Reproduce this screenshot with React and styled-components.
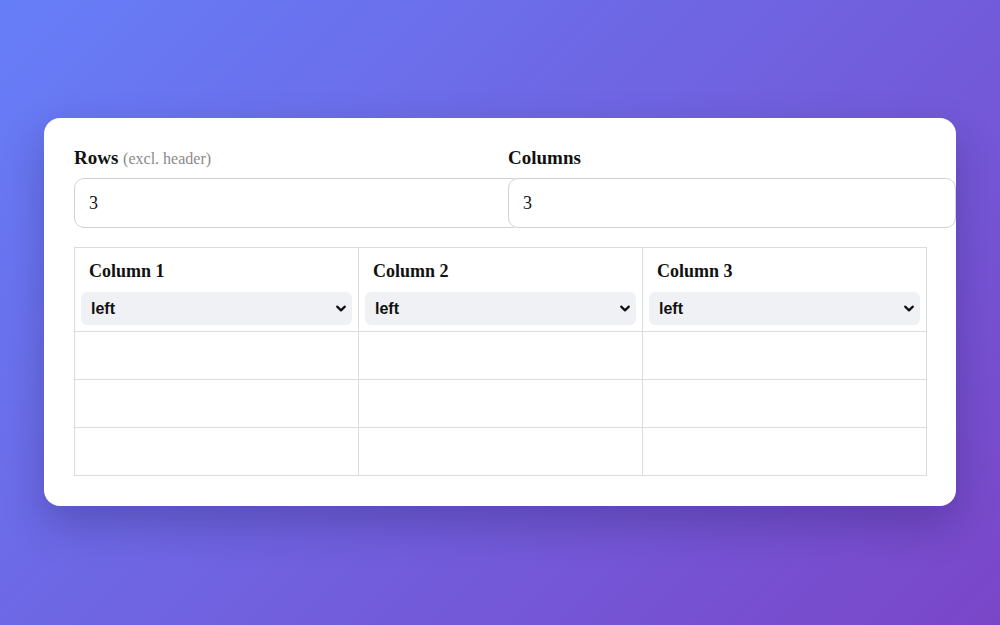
import React, { useState } from 'react';
import styled, { createGlobalStyle } from 'styled-components';

const GlobalStyle = createGlobalStyle`
  html, body {
    margin: 0;
    padding: 0;
  }
  body {
    font-family: "Liberation Serif", "Times New Roman", serif;
    color: #111;
  }
  * {
    box-sizing: content-box;
  }
`;

const Page = styled.div`
  box-sizing: border-box;
  min-height: 625px;
  padding-bottom: 2px;
  display: flex;
  align-items: center;
  justify-content: center;
  background: linear-gradient(135deg, #667ef8 0%, #7a46c8 100%);
`;

const Card = styled.div`
  width: 852px;
  padding: 30px;
  background: #fff;
  border-radius: 16px;
  overflow: hidden;
  box-shadow: 0 18px 40px rgba(30, 20, 80, 0.28);
`;

const SizeFields = styled.div`
  display: grid;
  grid-template-columns: 1fr 1fr;
  gap: 16px;
  margin-bottom: 19px;
`;

const Field = styled.div`
  display: flex;
  flex-direction: column;
  min-width: 0;
`;

const Label = styled.label`
  display: block;
  height: 20px;
  font-size: 19px;
  font-weight: 700;
  line-height: 20px;
  margin-bottom: 10px;
`;

const Hint = styled.span`
  font-size: 16px;
  font-weight: 400;
  line-height: 16px;
  color: #8a8a8a;
`;

const NumberInput = styled.input`
  width: 100%;
  padding: 14px;
  border: 1px solid #d2d2d2;
  border-radius: 10px;
  font-family: "Liberation Serif", "Times New Roman", serif;
  font-size: 18px;
  line-height: 20px;
  color: #111;
  background: #fff;
  outline: none;
`;

const Table = styled.table`
  width: 100%;
  border-collapse: collapse;
  table-layout: fixed;
  border: 1px solid #dcdcdc;
`;

const HeadCell = styled.th`
  padding: 6px;
  border: 1px solid #dcdcdc;
  text-align: left;
  vertical-align: top;
  font-weight: 400;
`;

const ColumnTitle = styled.div`
  padding: 7px 8px 11px;
  font-size: 18px;
  font-weight: 700;
  line-height: 20px;
`;

const SelectWrap = styled.div`
  position: relative;
`;

const AlignSelect = styled.select`
  appearance: none;
  -webkit-appearance: none;
  display: block;
  width: 100%;
  box-sizing: border-box;
  height: 33px;
  padding: 0 28px 0 10px;
  border: none;
  border-radius: 6px;
  background: #f0f1f4;
  font-family: "Liberation Sans", Arial, sans-serif;
  font-size: 16px;
  font-weight: 700;
  color: #111;
  outline: none;
`;

const Chevron = styled.svg`
  position: absolute;
  right: 5px;
  top: 12px;
  pointer-events: none;
`;

const BodyCell = styled.td`
  height: 47px;
  padding: 0;
  border: 1px solid #dcdcdc;
`;

const ChevronDown = () => (
  <Chevron width="12" height="9" viewBox="0 0 12 9">
    <path d="M2.2 2.6 L6 6.4 L9.8 2.6" fill="none" stroke="#111" strokeWidth="2.2" strokeLinecap="round" strokeLinejoin="round" />
  </Chevron>
);

export default function App() {
  const [rows, setRows] = useState('3');
  const [cols, setCols] = useState('3');
  const [aligns, setAligns] = useState(['left', 'left', 'left']);

  const colCount = Math.max(1, parseInt(cols, 10) || 1);
  const rowCount = Math.max(0, parseInt(rows, 10) || 0);

  const setAlign = (i, value) => {
    const next = [...aligns];
    next[i] = value;
    setAligns(next);
  };

  return (
    <Page>
      <GlobalStyle />
      <Card>
        <SizeFields>
          <Field>
            <Label>
              Rows <Hint>(excl. header)</Hint>
            </Label>
            <NumberInput value={rows} onChange={(e) => setRows(e.target.value)} />
          </Field>
          <Field>
            <Label>Columns</Label>
            <NumberInput value={cols} onChange={(e) => setCols(e.target.value)} />
          </Field>
        </SizeFields>

        <Table>
          <thead>
            <tr>
              {Array.from({ length: colCount }).map((_, i) => (
                <HeadCell key={i}>
                  <ColumnTitle>Column {i + 1}</ColumnTitle>
                  <SelectWrap>
                    <AlignSelect
                      value={aligns[i] || 'left'}
                      onChange={(e) => setAlign(i, e.target.value)}
                    >
                      <option value="left">left</option>
                      <option value="center">center</option>
                      <option value="right">right</option>
                    </AlignSelect>
                    <ChevronDown />
                  </SelectWrap>
                </HeadCell>
              ))}
            </tr>
          </thead>
          <tbody>
            {Array.from({ length: rowCount }).map((_, r) => (
              <tr key={r}>
                {Array.from({ length: colCount }).map((_, c) => (
                  <BodyCell key={c} />
                ))}
              </tr>
            ))}
          </tbody>
        </Table>
      </Card>
    </Page>
  );
}
